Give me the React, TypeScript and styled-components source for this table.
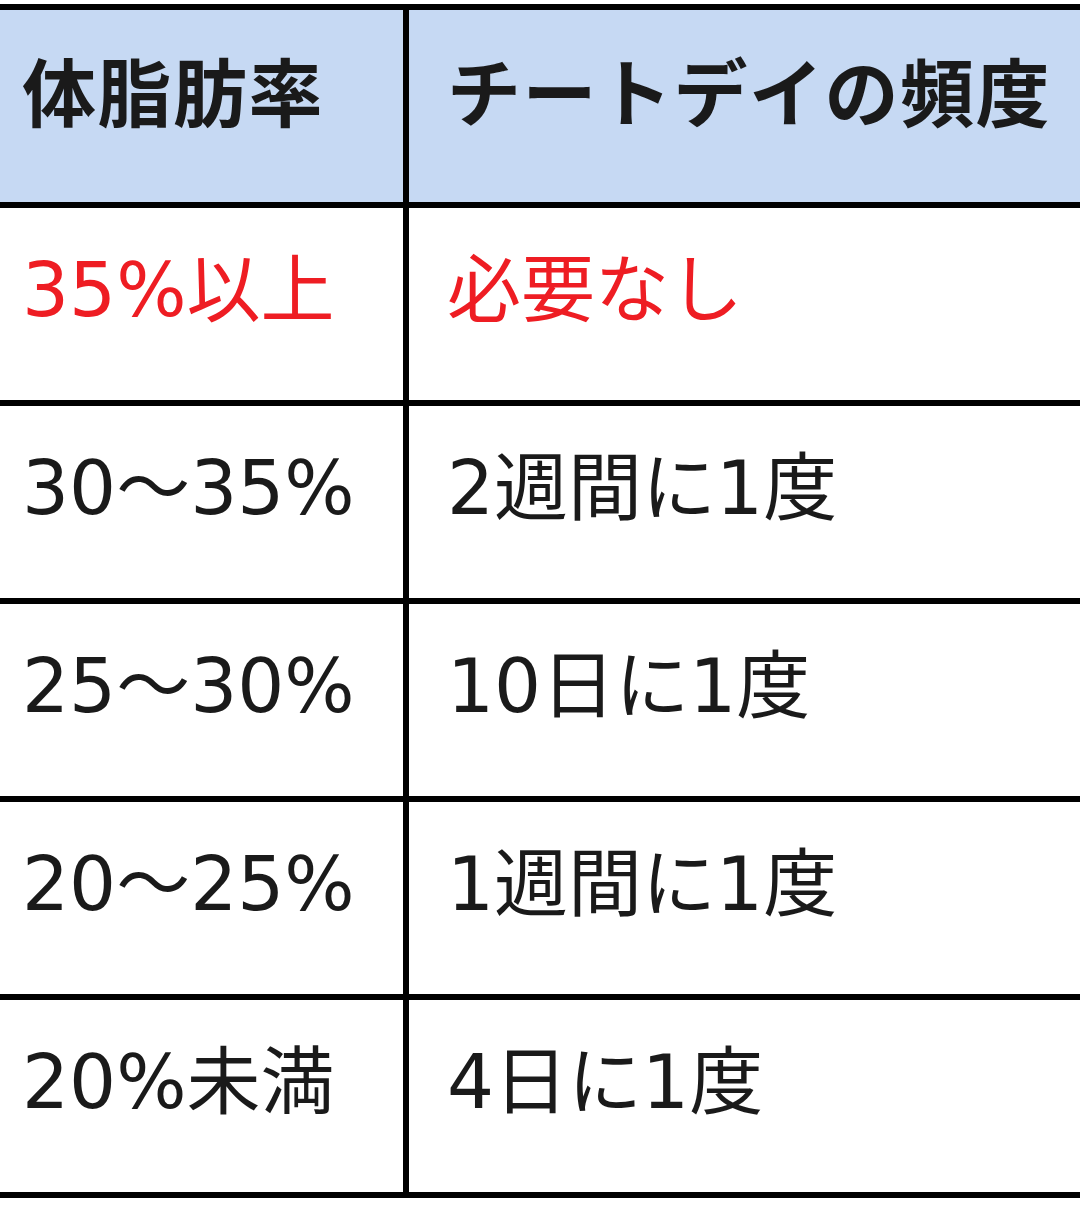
import { Fragment } from 'react'
import { createGlobalStyle, styled } from 'styled-components'

const GlobalStyle = createGlobalStyle`
  html, body {
    margin: 0;
    padding: 0;
    background: #ffffff;
  }
  body {
    font-family: "DejaVu Sans", "Noto Sans CJK JP", sans-serif;
  }
`

const Page = styled.div`
  padding-top: 4px;
  width: 1080px;
  overflow: hidden;
`

// Black grid background shows through the gaps as the cell rules
const Table = styled.div`
  display: grid;
  grid-template-columns: 403px 1fr;
  grid-auto-rows: 192px;
  gap: 6px;
  padding: 6px 0;
  background: #000000;
`

const Cell = styled.div<{ $head?: boolean; $alert?: boolean; $second?: boolean }>`
  display: flex;
  align-items: flex-start;
  box-sizing: border-box;
  padding: ${({ $head }) => ($head ? '48px' : '45px')} 0 0
    ${({ $second }) => ($second ? '38px' : '22px')};
  background: ${({ $head }) => ($head ? '#c6d9f3' : '#ffffff')};
  color: ${({ $alert }) => ($alert ? '#ee1d23' : '#1a1a1a')};
  font-size: 74px;
  line-height: 1;
  font-weight: ${({ $head }) => ($head ? 700 : 400)};
  letter-spacing: ${({ $head }) => ($head ? '1.5px' : '0')};
  white-space: nowrap;
`

const rows = [
  { fat: '35%以上', freq: '必要なし', alert: true },
  { fat: '30〜35%', freq: '2週間に1度' },
  { fat: '25〜30%', freq: '10日に1度' },
  { fat: '20〜25%', freq: '1週間に1度' },
  { fat: '20%未満', freq: '4日に1度' },
]

export default function App() {
  return (
    <Page>
      <GlobalStyle />
      <Table>
        <Cell $head>体脂肪率</Cell>
        <Cell $head $second>
          チートデイの頻度
        </Cell>
        {rows.map((r) => (
          <Fragment key={r.fat}>
            <Cell $alert={r.alert}>{r.fat}</Cell>
            <Cell $alert={r.alert} $second>
              {r.freq}
            </Cell>
          </Fragment>
        ))}
      </Table>
    </Page>
  )
}
